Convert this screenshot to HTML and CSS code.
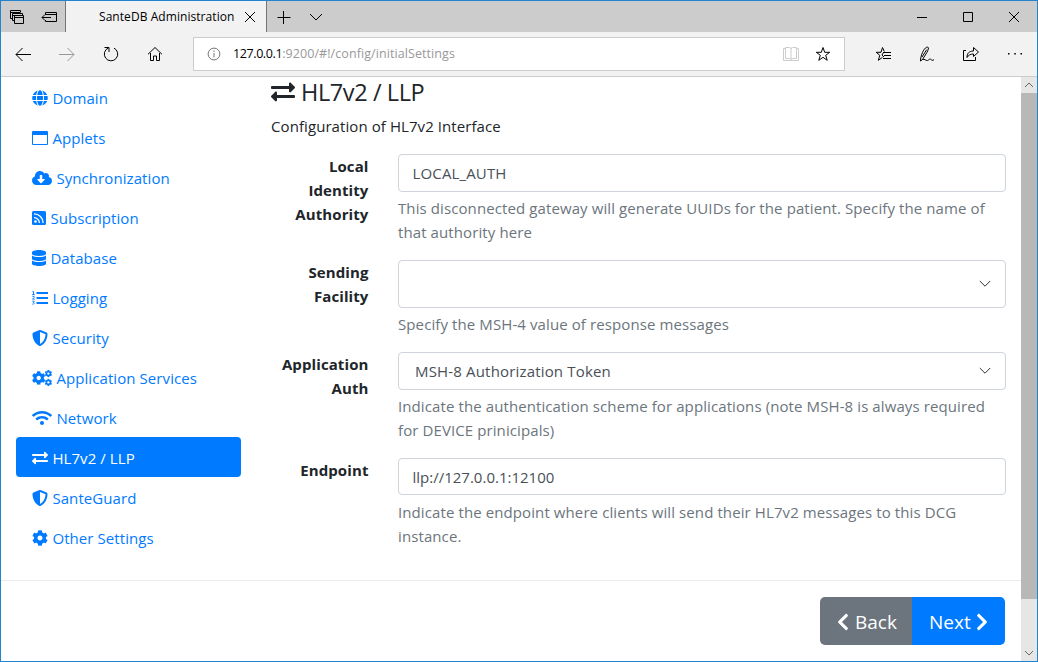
FILE: index.html
```html
<!DOCTYPE html>
<html lang="en">
<head>
<meta charset="utf-8">
<title>SanteDB Administration</title>
<link rel="stylesheet" href="styles.css">
</head>
<body>
<svg class="defs" width="0" height="0">
  <symbol id="exchange" viewBox="0 0 512 512"><path d="M0 168v-16c0-13.255 10.745-24 24-24h360V80c0-21.367 25.899-32.042 40.971-16.971l80 80c9.372 9.373 9.372 24.569 0 33.941l-80 80C409.956 271.982 384 261.456 384 240v-48H24c-13.255 0-24-10.745-24-24zm488 152H128v-48c0-21.314-25.862-32.08-40.971-16.971l-80 80c-9.372 9.373-9.372 24.569 0 33.941l80 80C102.057 463.997 128 453.437 128 432v-48h360c13.255 0 24-10.745 24-24v-16c0-13.255-10.745-24-24-24z"/></symbol>
  <symbol id="globe" viewBox="0 0 496 512"><path d="M336.5 160C322 70.7 287.8 8 248 8s-74 62.7-88.5 152h177zM152 256c0 22.2 1.2 43.5 3.3 64h185.3c2.1-20.5 3.3-41.8 3.3-64s-1.2-43.5-3.3-64H155.3c-2.1 20.5-3.3 41.8-3.3 64zm324.7-96c-28.6-67.9-86.5-120.4-158-141.6 24.4 33.8 41.2 84.7 50 141.6h108zM177.2 18.4C105.8 39.6 47.8 92.1 19.3 160h108c8.7-56.9 25.5-107.8 49.9-141.6zM487.4 192H372.7c2.1 21 3.3 42.5 3.3 64s-1.2 43-3.3 64h114.6c5.5-20.5 8.6-41.8 8.6-64s-3.1-43.5-8.5-64zM120 256c0-21.5 1.2-43 3.3-64H8.6C3.2 212.5 0 233.8 0 256s3.2 43.5 8.6 64h114.6c-2-21-3.2-42.5-3.2-64zm39.5 96c14.5 89.3 48.7 152 88.5 152s74-62.7 88.5-152h-177zm159.3 141.6c71.4-21.2 129.4-73.7 158-141.6h-108c-8.8 56.9-25.6 107.8-50 141.6zM19.3 352c28.6 67.9 86.5 120.4 158 141.6-24.4-33.8-41.2-84.7-50-141.6h-108z"/></symbol>
  <symbol id="window" viewBox="0 0 16 16"><path fill-rule="evenodd" d="M1 1h14a1 1 0 0 1 1 1v12a1 1 0 0 1-1 1H1a1 1 0 0 1-1-1V2a1 1 0 0 1 1-1zm0 4v9h14V5z"/></symbol>
  <symbol id="cloud" viewBox="0 0 640 512"><path d="M537.6 226.6c4.1-10.7 6.4-22.4 6.4-34.6 0-53-43-96-96-96-19.7 0-38.1 6-53.3 16.2C367 64.2 315.3 32 256 32c-88.4 0-160 71.6-160 160 0 2.7.1 5.4.2 8.1C40.2 219.8 0 273.2 0 336c0 79.5 64.5 144 144 144h368c70.7 0 128-57.3 128-128 0-61.9-44-113.6-102.4-125.4zm-132.9 88.7L299.3 420.7c-6.2 6.2-16.4 6.2-22.6 0L171.3 315.3c-10.1-10.1-2.9-27.3 11.3-27.3H248V176c0-8.8 7.2-16 16-16h48c8.8 0 16 7.2 16 16v112h65.4c14.2 0 21.4 17.2 11.3 27.3z"/></symbol>
  <symbol id="rss" viewBox="0 0 14 16"><rect y="1" width="14" height="14" rx="1.5"/><circle cx="3.5" cy="11.5" r="1.3" fill="#fff"/><path d="M2 7.600a5.400 5.400 0 0 1 5.400 5.400M2 3.900a9.100 9.100 0 0 1 9.100 9.100" fill="none" stroke="#fff" stroke-width="1.3"/></symbol>
  <symbol id="database" viewBox="0 0 448 512"><path d="M448 73.143v45.714C448 159.143 347.667 192 224 192S0 159.143 0 118.857V73.143C0 32.857 100.333 0 224 0s224 32.857 224 73.143zM448 176v102.857C448 319.143 347.667 352 224 352S0 319.143 0 278.857V176c48.125 33.143 136.208 48.572 224 48.572S399.874 209.143 448 176zm0 160v102.857C448 479.143 347.667 512 224 512S0 479.143 0 438.857V336c48.125 33.143 136.208 48.572 224 48.572S399.874 369.143 448 336z"/></symbol>
  <symbol id="list" viewBox="0 0 16 16"><path d="M4.500 2h11.500v2H4.500zM4.500 7h11.500v2H4.500zM4.500 12h11.500v2H4.500z"/><path d="M.4 1.500h1.100v3M.2 4.500h2.600M.3 6.300h1.900v1L.5 9.200h2.300M.3 11.200h2l-1 1.300c1.600 0 1.300 2-.9 1.600" fill="none" stroke="currentColor" stroke-width=".9"/></symbol>
  <symbol id="shield" viewBox="0 0 512 512"><path d="M466.5 83.7l-192-80a48.15 48.15 0 0 0-36.9 0l-192 80C27.7 91.1 16 108.6 16 128c0 198.5 114.5 335.7 221.5 380.3 11.8 4.9 25.1 4.9 36.9 0C360.1 472.6 496 349.3 496 128c0-19.4-11.7-36.9-29.5-44.3zM256.1 446.3l-.1-381 175.9 73.3c-3.3 151.4-82.1 261.1-175.8 307.7z"/></symbol>
  <symbol id="cog" viewBox="0 0 512 512"><path d="M487.4 315.7l-42.6-24.6c4.3-23.2 4.3-47 0-70.2l42.6-24.6c4.9-2.8 7.1-8.6 5.5-14-11.1-35.6-30-67.8-54.7-94.6-3.8-4.1-10-5.1-14.8-2.3L380.8 110c-17.9-15.4-38.5-27.3-60.8-35.1V25.8c0-5.6-3.9-10.5-9.4-11.7-36.7-8.2-74.3-7.8-109.2 0-5.5 1.2-9.4 6.1-9.4 11.7V75c-22.2 7.9-42.8 19.8-60.8 35.1L88.7 85.5c-4.9-2.8-11-1.9-14.8 2.3-24.7 26.7-43.6 58.9-54.7 94.6-1.700 5.400.6 11.200 5.500 14L67.300 221c-4.300 23.200-4.300 47 0 70.200l-42.600 24.600c-4.900 2.800-7.100 8.600-5.500 14 11.100 35.600 30 67.800 54.700 94.600 3.800 4.100 10 5.100 14.800 2.300l42.600-24.600c17.900 15.400 38.500 27.300 60.800 35.100v49.200c0 5.600 3.900 10.500 9.400 11.700 36.700 8.200 74.300 7.800 109.200 0 5.500-1.200 9.400-6.100 9.400-11.700v-49.200c22.200-7.900 42.800-19.800 60.800-35.100l42.600 24.600c4.900 2.800 11 1.900 14.800-2.300 24.700-26.700 43.600-58.900 54.700-94.600 1.500-5.500-.7-11.300-5.600-14.100zM256 336c-44.100 0-80-35.900-80-80s35.900-80 80-80 80 35.900 80 80-35.900 80-80 80z"/></symbol>
  <symbol id="cogs" viewBox="0 0 20 16"><use href="#cog" x="-.3" y="1" width="14" height="14"/><use href="#cog" x="12.600" y="-.2" width="7.600" height="7.600"/><use href="#cog" x="12.600" y="8.600" width="7.600" height="7.600"/></symbol>
  <symbol id="wifi" viewBox="0 0 640 512"><path d="M634.91 154.88C457.74-8.99 182.19-8.93 5.09 154.88c-6.66 6.16-6.79 16.59-.35 22.98l34.24 33.97c6.14 6.1 16.02 6.23 22.4.38 145.92-133.68 371.3-133.71 517.25 0 6.38 5.85 16.26 5.71 22.4-.38l34.24-33.97c6.43-6.39 6.3-16.82-.36-22.98zM320 352c-35.35 0-64 28.65-64 64s28.65 64 64 64 64-28.65 64-64-28.65-64-64-64zm202.67-83.59c-115.26-101.93-290.21-101.82-405.34 0-6.9 6.1-7.12 16.69-.57 23.15l34.44 33.99c6 5.92 15.66 6.32 22.05.8 83.95-72.57 209.74-72.41 293.49 0 6.39 5.52 16.05 5.13 22.05-.8l34.44-33.99c6.56-6.46 6.33-17.06-.56-23.15z"/></symbol>
  <symbol id="chevron" viewBox="0 0 320 512"><path d="M34.52 239.03L228.87 44.69c9.37-9.37 24.57-9.37 33.94 0l22.67 22.67c9.36 9.36 9.37 24.52.04 33.9L131.49 256l154.02 154.75c9.34 9.38 9.32 24.54-.04 33.9l-22.67 22.67c-9.37 9.37-24.57 9.37-33.94 0L34.52 272.97c-9.37-9.37-9.37-24.57 0-33.94z"/></symbol>
</svg>
<div class="browser">
  <header class="titlebar">
    <div class="tab-tools">
      <svg class="line" width="16" height="16" viewBox="0 0 16 16"><path d="M3.500 9.500h-2v-8h10v2M2 3.500h9M5.500 11.500h-2v-7h10v2M4 6.500h8M5.500 6.500h9v8h-9zM5.500 8.500h9"/></svg>
      <svg class="line" width="16" height="16" viewBox="0 0 16 16"><path d="M4.500 6v-2.500h11v9h-11V11M4.500 5.500h11M1 8.500h9M4 5.500l-3 3 3 3"/></svg>
    </div>
    <div class="tab"><span class="tab-title">SanteDB Administration</span><svg class="line" width="12" height="12" viewBox="0 0 12 12"><path d="M1 1l10 10M11 1L1 11"/></svg></div>
    <div class="tab-actions">
      <svg class="line" width="14" height="14" viewBox="0 0 14 14"><path d="M.5 7.500h13M6.500 1v13"/></svg>
      <svg class="line" width="14" height="8" viewBox="0 0 14 8"><path d="M1 1l6 6 6-6"/></svg>
    </div>
    <div class="window-controls">
      <svg class="line" width="10" height="10" viewBox="0 0 10 10"><path d="M0 5.500h10"/></svg>
      <svg class="line" width="10" height="10" viewBox="0 0 10 10"><path d="M.5.5h9v9h-9z"/></svg>
      <svg class="line" width="10" height="10" viewBox="0 0 10 10"><path d="M0 0l10 10M10 0L0 10"/></svg>
    </div>
  </header>
  <div class="toolbar">
    <div class="nav-buttons">
      <svg class="line" width="16" height="16" viewBox="0 0 16 16"><path d="M1 8.500h15M7.500 2L1 8.500 7.500 15"/></svg>
      <svg class="line faded" width="16" height="16" viewBox="0 0 16 16"><path d="M0 8.500h15M8.500 2L15 8.500 8.500 15"/></svg>
      <svg class="line" width="16" height="16" viewBox="0 0 16 16"><path d="M1.500 1.500H6V6M5.500 1.900a6.700 6.700 0 1 0 5.500.2"/></svg>
      <svg class="line" width="16" height="16" viewBox="0 0 16 16"><path d="M1 8.300L8 1.500l7 6.800M3.500 7v7.500h3v-4.500h3v4.500h3V7"/></svg>
    </div>
    <div class="address">
      <svg class="line info" width="14" height="14" viewBox="0 0 14 14"><circle cx="7" cy="7" r="5.900"/><path d="M7 6v4.500M7 3.500V5"/></svg>
      <span class="url"><b>127.0.0.1</b>:9200/#!/config/initialSettings</span>
      <svg class="line book" width="16" height="16" viewBox="0 0 16 16"><path d="M.5 2.500h2v-1h4q1.500 0 1.500 1.500 0-1.500 1.500-1.500h4v1h2v12H.5zM2.500 2v10.500h4q1.500 0 1.500 1V3M13.500 2v10.500h-4q-1.500 0-1.500 1"/></svg>
      <svg class="line star" width="16" height="16" viewBox="0 0 16 16"><path d="M8 1.500l1.700 4.800h5l-4 3 1.500 5L8 11.300l-4.200 3 1.500-5-4-3h5z"/></svg>
    </div>
    <div class="tools">
      <svg class="line" width="16" height="16" viewBox="0 0 16 16"><path d="M9.300 5.500L7.500 1.500 6 6.300H1.200l3.600 3-1.500 5 4.200-3M8 6.500h8M9 9.500h7M8 12.500h8M8.500 6.500L7 9l2 2"/></svg>
      <svg class="line pen" width="16" height="16" viewBox="0 0 16 16"><path d="M1.500 15C1.500 10 4.500 2.500 7.500 1.300c2.500-.8 2.500 1.200.5 5L3.500 13.500M3 11L7.800 3.500M1.500 15l2-1.500c2.500-1 3 1.500 5 1 1.500-.5 2-2 3-1.300s1.500 1.800 3.500.5"/></svg>
      <svg class="line" width="16" height="16" viewBox="0 0 16 16"><path d="M3 4.500H.5v10h12V11M4 11.500c0-4 2-6.500 6.500-6.500V1.500l5 4.500-5 4.500V8c-3 0-5 1-6.500 3.500z"/></svg>
      <svg width="16" height="16" viewBox="0 0 16 16"><path d="M1 7h1.500v1.500H1zM7.300 7h1.500v1.500H7.300zM13.500 7H15v1.500h-1.500z"/></svg>
    </div>
  </div>
  <div class="viewport">
    <div class="page">
      <div class="columns">
        <nav class="side">
          <a><svg class="icon w16"><use href="#globe"/></svg><span>Domain</span></a>
          <a><svg class="icon w16"><use href="#window"/></svg><span>Applets</span></a>
          <a><svg class="icon w20"><use href="#cloud"/></svg><span>Synchronization</span></a>
          <a><svg class="icon w14"><use href="#rss"/></svg><span>Subscription</span></a>
          <a><svg class="icon w14"><use href="#database"/></svg><span>Database</span></a>
          <a><svg class="icon w16"><use href="#list"/></svg><span>Logging</span></a>
          <a><svg class="icon w16"><use href="#shield"/></svg><span>Security</span></a>
          <a><svg class="icon w20"><use href="#cogs"/></svg><span>Application Services</span></a>
          <a><svg class="icon w20"><use href="#wifi"/></svg><span>Network</span></a>
          <a class="active"><svg class="icon w16"><use href="#exchange"/></svg><span>HL7v2 / LLP</span></a>
          <a><svg class="icon w16"><use href="#shield"/></svg><span>SanteGuard</span></a>
          <a><svg class="icon w16"><use href="#cog"/></svg><span>Other Settings</span></a>
        </nav>
        <main class="panel">
          <h4><svg class="icon w24"><use href="#exchange"/></svg><span>HL7v2 / LLP</span></h4>
          <p class="intro">Configuration of HL7v2 Interface</p>
          <div class="group">
            <label>Local<br>Identity<br>Authority</label>
            <div class="field"><div class="control">LOCAL_AUTH</div><small>This disconnected gateway will generate UUIDs for the patient. Specify the name of<br>that authority here</small></div>
          </div>
          <div class="group">
            <label>Sending<br>Facility</label>
            <div class="field"><div class="control select tall"><span></span><svg class="line" width="12" height="8" viewBox="0 0 12 8"><path d="M.8 1l5.200 5.200L11.200 1"/></svg></div><small>Specify the MSH-4 value of response messages</small></div>
          </div>
          <div class="group">
            <label>Application<br>Auth</label>
            <div class="field"><div class="control select"><span>MSH-8 Authorization Token</span><svg class="line" width="12" height="8" viewBox="0 0 12 8"><path d="M.8 1l5.200 5.200L11.200 1"/></svg></div><small>Indicate the authentication scheme for applications (note MSH-8 is always required<br>for DEVICE prinicipals)</small></div>
          </div>
          <div class="group">
            <label>Endpoint</label>
            <div class="field"><div class="control short">llp://127.0.0.1:12100</div><small>Indicate the endpoint where clients will send their HL7v2 messages to this DCG<br>instance.</small></div>
          </div>
        </main>
      </div>
      <footer class="actions">
        <div class="back"><svg class="icon chev"><use href="#chevron"/></svg><span>Back</span></div>
        <div class="next"><span>Next</span><svg class="icon chev flip"><use href="#chevron"/></svg></div>
      </footer>
    </div>
    <div class="scrollbar">
      <svg class="line" width="16" height="16" viewBox="0 0 16 16"><path d="M4 10l4-4 4 4"/></svg>
      <div class="thumb"></div>
      <svg class="line" width="16" height="16" viewBox="0 0 16 16"><path d="M4 6l4 4 4-4"/></svg>
    </div>
  </div>
</div>
</body>
</html>
```
FILE: styles.css
```css
* { box-sizing: border-box; }
body { margin: 0; font: 15px/24px "Open Sans", "Noto Sans", sans-serif; color: #212529; background: #fff; }
svg { flex: none; display: block; }
.defs { position: absolute; }
.line { fill: none; stroke: #000; stroke-width: 1; }
.browser { width: 1038px; height: 662px; border: 1px solid #2383cc; display: flex; flex-direction: column; overflow: hidden; }

.titlebar { height: 31px; background: #ccc; display: flex; }
.tab-tools { width: 65px; border-right: 1px solid #767676; display: flex; align-items: center; gap: 16px; padding-left: 8px; }
.tab { width: 200px; background: #f2f2f2; display: flex; align-items: center; padding-left: 33px; gap: 9px; color: #000; font-size: 12px; }
.tab-title { width: 136px; overflow: hidden; white-space: nowrap; letter-spacing: .06px; }
.tab-actions { border-left: 1px solid #767676; display: flex; align-items: center; gap: 18px; padding-left: 10px; }
.window-controls { margin-left: auto; display: flex; align-items: center; gap: 36px; padding-right: 18px; }

.toolbar { height: 45px; background: #f2f2f2; border-bottom: 1px solid #ccc; display: flex; align-items: center; }
.nav-buttons { display: flex; gap: 28px; padding-left: 14px; width: 192px; }
.faded { stroke: #999; }
.address { width: 652px; height: 34px; border: 1px solid #ccc; background: #fff; display: flex; align-items: center; padding: 0 13px; }
.info { stroke: #767676; }
.url { margin-left: 12px; flex: 1; font-size: 12.5px; letter-spacing: .08px; color: #999; }
.url b { font-weight: 400; color: #000; letter-spacing: -.4px; }
.book { stroke: #ccc; margin-right: 16px; }
.tools { display: flex; gap: 28px; margin-left: 30px; }

.viewport { flex: 1; min-height: 0; display: flex; }
.page { width: 1020px; }
.columns { display: flex; padding-left: 15px; height: 504px; border-bottom: 1px solid #e9ecef; }
.side { width: 225px; }
.side a { height: 40px; padding: 2px 16px 0; display: flex; align-items: center; gap: 4.4px; color: #007bff; border-radius: 4px; letter-spacing: .08px; }
.side .active { background: #007bff; color: #fff; }
.icon { height: 16px; fill: currentColor; }
.side .icon { margin-top: -1px; position: relative; top: .5px; }
.w14 { width: 14px; }
.w16 { width: 16px; }
.w20 { width: 20px; }
.panel { margin-left: 30px; width: 735px; }
h4 { margin: 0 0 8px; height: 29px; padding-top: 1px; display: flex; align-items: center; gap: 6px; font-size: 23.5px; font-weight: 400; letter-spacing: -.4px; }
h4 .w24 { width: 24px; height: 24px; }
.intro { margin: 0 0 16px; letter-spacing: .08px; }
.group { display: flex; margin-bottom: 16px; }
label { width: 97.500px; margin-right: 29.500px; text-align: right; font-weight: 700; letter-spacing: .1px; }
.field { flex: 1; }
.control { height: 38px; border: 1px solid #ced4da; border-radius: 4px; padding: 0 13.500px; display: flex; align-items: center; color: #495057; margin-bottom: 4px; letter-spacing: .15px; }
.select { padding: 0 14.500px 0 16px; justify-content: space-between; letter-spacing: .17px; }
.select svg { stroke: #333; }
.tall { height: 48px; }
.short { height: 37px; margin-bottom: 5px; letter-spacing: 0; }
small { display: block; font-size: 15px; color: #6c757d; white-space: nowrap; letter-spacing: .1px; }

.actions { display: flex; justify-content: flex-end; padding: 16px 16px 0 0; color: #fff; font-size: 19px; }
.back, .next { height: 48px; display: flex; align-items: center; gap: 6px; padding-top: 2px; }
.back { width: 92px; background: #6c757d; border-radius: 5px 0 0 5px; padding-left: 17px; }
.next { width: 93px; background: #007bff; border-radius: 0 5px 5px 0; padding-left: 17px; }
.actions .chev { width: 12px; height: 20px; margin-top: -1px; }
.next .chev { margin-left: -1px; }
.flip { transform: scaleX(-1); }

.scrollbar { width: 16px; background: #e6e6e6; display: flex; flex-direction: column; }
.scrollbar svg { stroke: #666; }
.thumb { height: 506px; background: #b8b8b8; margin-bottom: auto; }
```
